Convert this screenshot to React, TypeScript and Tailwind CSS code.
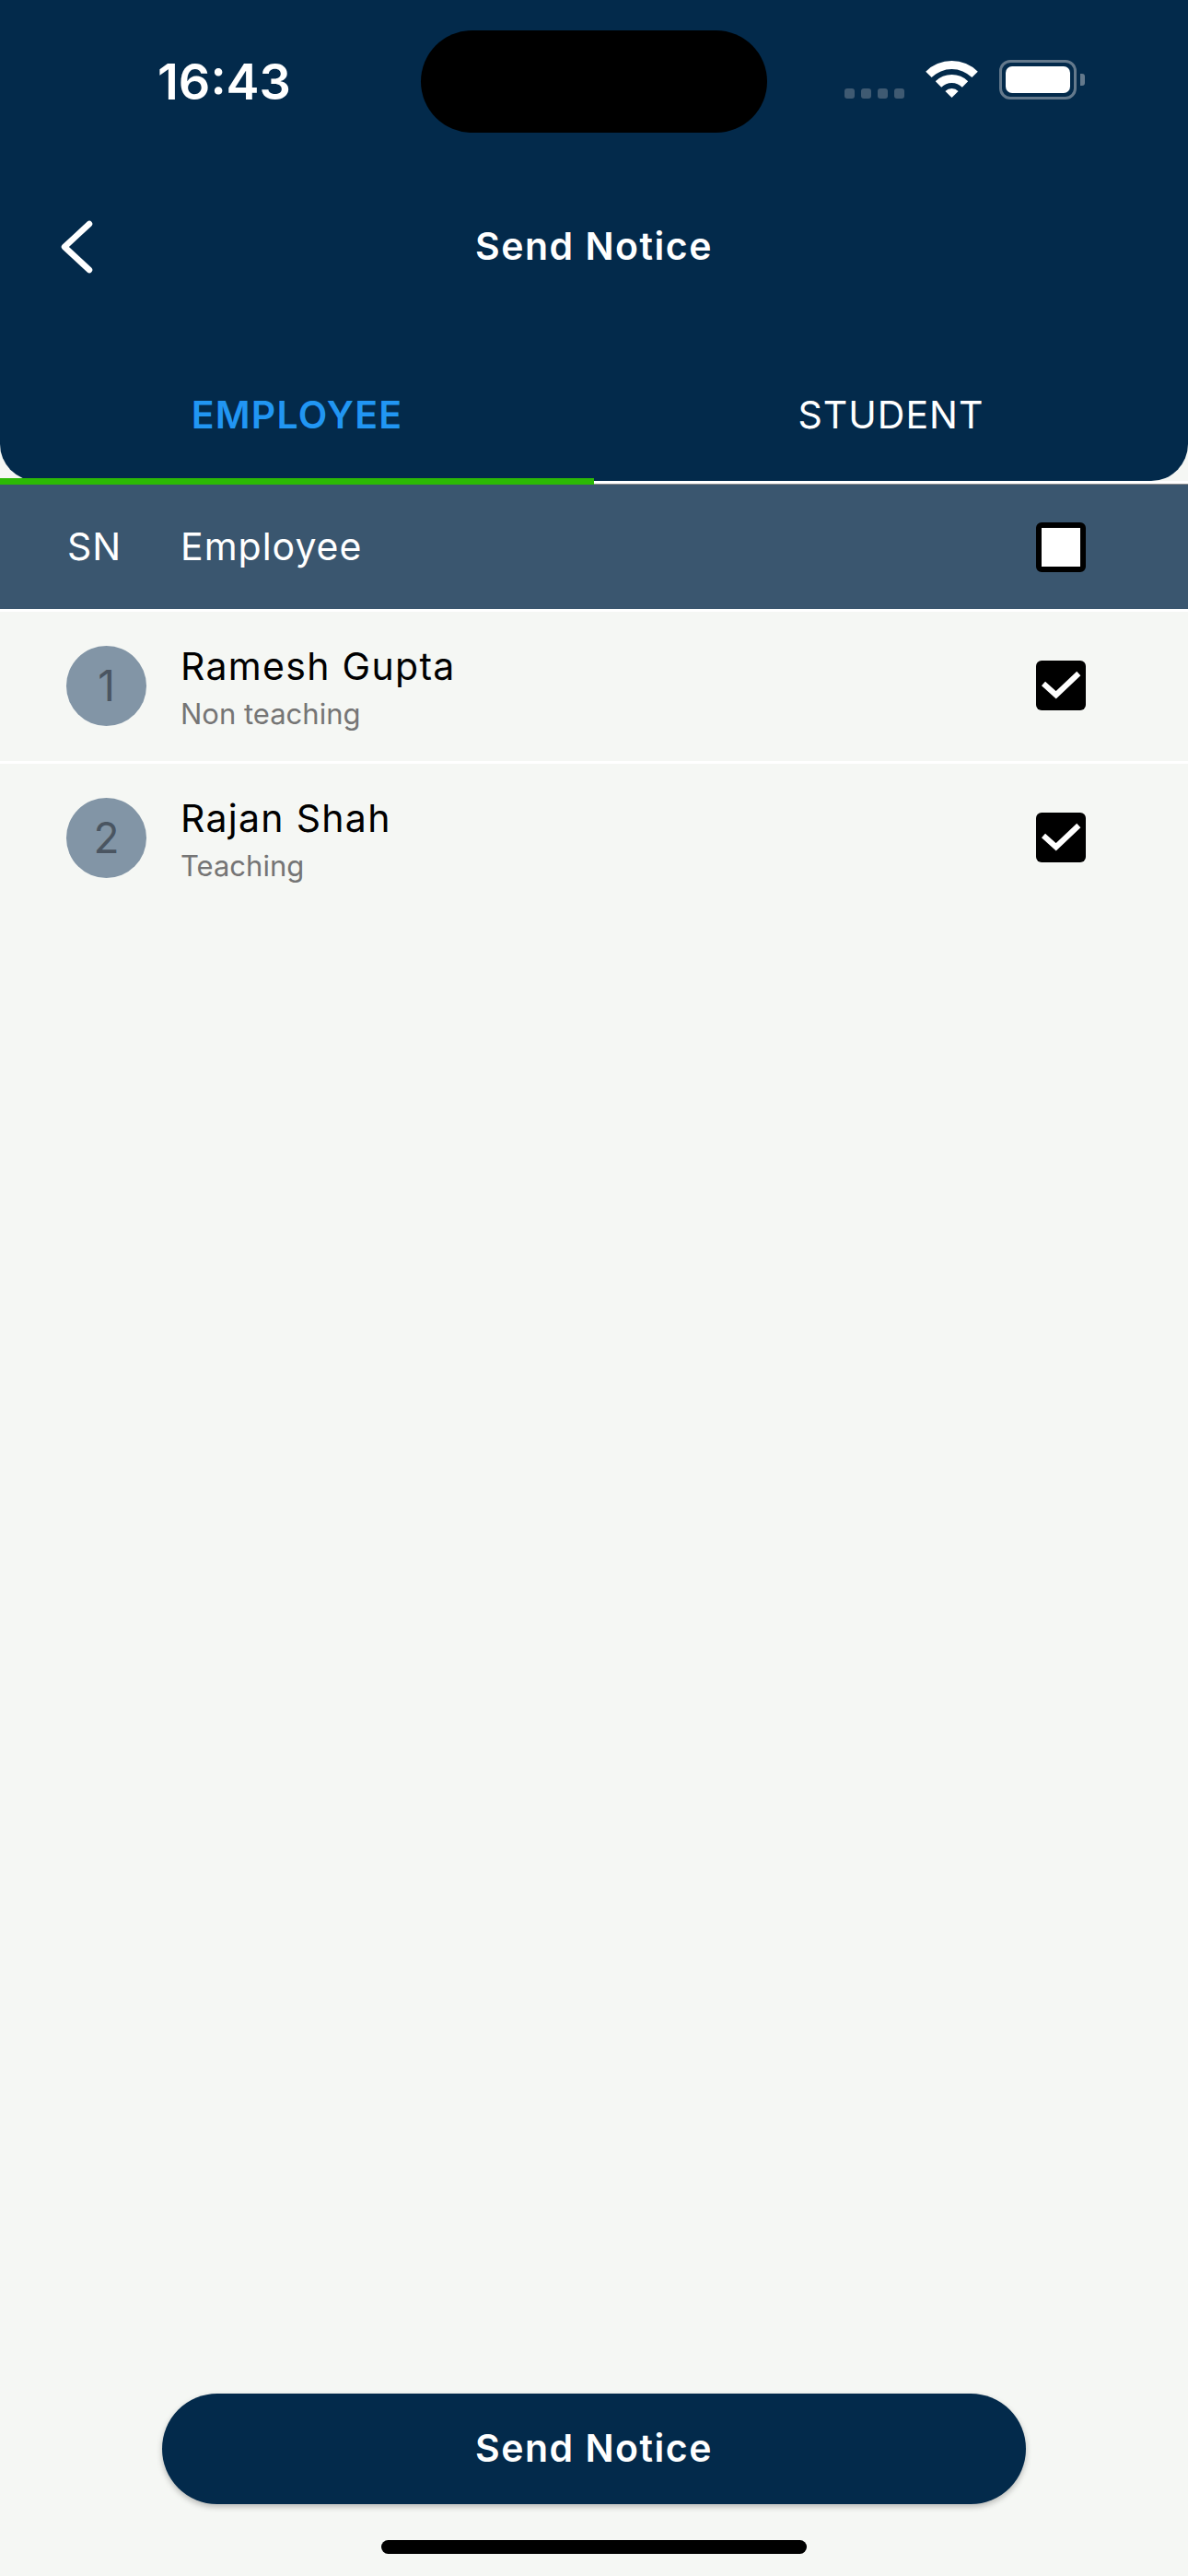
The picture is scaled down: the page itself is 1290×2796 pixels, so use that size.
const employees = [
  { sn: 1, name: 'Ramesh Gupta', role: 'Non teaching' },
  { sn: 2, name: 'Rajan Shah', role: 'Teaching' },
]

function WifiIcon() {
  return (
    <svg width="57" height="42" viewBox="0 0 57 42" fill="#fff">
      <path d="M0.2 12.7A40 40 0 0 1 56.8 12.7L50.4 19.1A31 31 0 0 0 6.6 19.1Z" />
      <path d="M10.8 23.3A25 25 0 0 1 46.2 23.3L39.8 29.7A16 16 0 0 0 17.2 29.7Z" />
      <path d="M21.4 33.9A10 10 0 0 1 35.6 33.9L28.5 41Z" />
    </svg>
  )
}

function Checkbox({ checked }: { checked?: boolean }) {
  if (!checked) {
    return <div className="w-[54px] h-[54px] rounded-[6px] border-[6px] border-black bg-white" />
  }
  return (
    <div className="w-[54px] h-[54px] rounded-[6px] bg-black">
      <svg width="54" height="54" viewBox="0 0 54 54" fill="none">
        <path d="M8 25L21.7 37.3L46.3 14" stroke="#fff" strokeWidth="6" />
      </svg>
    </div>
  )
}

export default function App() {
  return (
    <div className="w-[1290px] h-[2796px] flex flex-col bg-[#f5f7f4] font-['Inter',sans-serif]">
      {/* header */}
      <div className="h-[522px] shrink-0 bg-[#032a4b] rounded-b-[40px] text-white">
        <div className="h-[144px] pt-[33px] flex items-start">
          <div className="w-[457px] h-[111px] pl-[171px] flex items-center text-[54px] font-semibold leading-none">
            16:43
          </div>
          <div className="w-[376px] h-[111px] rounded-full bg-black" />
          <div className="ml-[84px] mt-[63px] flex gap-[7px]">
            <span className="w-[11px] h-[11px] rounded-[3px] bg-[#3f5a72]" />
            <span className="w-[11px] h-[11px] rounded-[3px] bg-[#3f5a72]" />
            <span className="w-[11px] h-[11px] rounded-[3px] bg-[#3f5a72]" />
            <span className="w-[11px] h-[11px] rounded-[3px] bg-[#3f5a72]" />
          </div>
          <div className="ml-[23px] mt-[32px]">
            <WifiIcon />
          </div>
          <div className="ml-[23px] mt-[32px] flex items-center">
            <div className="w-[84px] h-[43px] rounded-[12px] border-[3px] border-[#64798c] p-[4px]">
              <div className="w-full h-full rounded-[7px] bg-white" />
            </div>
            <div className="ml-[4px] w-[5px] h-[13px] rounded-r-[3px] bg-[#64798c]" />
          </div>
        </div>

        <div className="mt-[93px] h-[60px] grid grid-cols-[1fr_auto_1fr] items-center">
          <svg className="ml-[64px]" width="40" height="62" viewBox="0 0 40 62" fill="none">
            <path d="M33 6L6 31L33 56" stroke="#fff" strokeWidth="6.5" strokeLinecap="round" strokeLinejoin="round" />
          </svg>
          <span className="text-[41px] font-semibold leading-none tracking-[1.5px] pb-[2px]">Send Notice</span>
          <span />
        </div>

        <div className="mt-[123px] h-[60px] grid grid-cols-2 items-center text-center text-[41px] leading-none">
          <span className="font-semibold text-[#2196f3] tracking-[1.2px]">EMPLOYEE</span>
          <span className="tracking-[1px]">STUDENT</span>
        </div>
      </div>

      {/* tab underline */}
      <div className="relative shrink-0 h-[4px] bg-white border-b border-[#8f8f8f]">
        <div className="absolute left-0 bottom-[-1px] w-[645px] h-[7px] bg-[#2cb906]" />
      </div>

      {/* table head */}
      <div className="h-[135px] shrink-0 flex items-center bg-[#3a566f] text-white text-[41px] tracking-[1px]">
        <span className="w-[196px] pl-[73px]">SN</span>
        <span className="flex-1">Employee</span>
        <div className="mr-[111px]">
          <Checkbox />
        </div>
      </div>
      <div className="h-[3px] shrink-0 bg-white" />

      {employees.map((e, i) => (
        <div
          key={e.sn}
          className={`shrink-0 flex items-center ${i === 0 ? 'h-[165px] pb-[2px] border-b-[3px] border-white' : 'h-[160px]'}`}
        >
          <div className="ml-[72px] w-[87px] h-[87px] rounded-full bg-[#8295a6] flex items-center justify-center text-[46px] text-[#4a5561]">
            {e.sn}
          </div>
          <div className="ml-[37px] flex-1 pt-[4px]">
            <div className="text-[41px] leading-[46px] text-black tracking-[1.3px]">{e.name}</div>
            <div className="mt-[11px] text-[31px] leading-[36px] text-[#757575]">{e.role}</div>
          </div>
          <div className="mr-[111px]">
            <Checkbox checked />
          </div>
        </div>
      ))}

      {/* footer */}
      <div className="mt-auto flex flex-col items-center">
        <button className="w-[938px] h-[120px] rounded-full bg-[#032a4b] text-white text-[41px] font-semibold tracking-[1.5px] shadow-[0_3px_6px_rgba(0,0,0,0.25)]">
          Send Notice
        </button>
        <div className="mt-[39px] mb-[24px] w-[462px] h-[15px] rounded-full bg-black" />
      </div>
    </div>
  )
}
